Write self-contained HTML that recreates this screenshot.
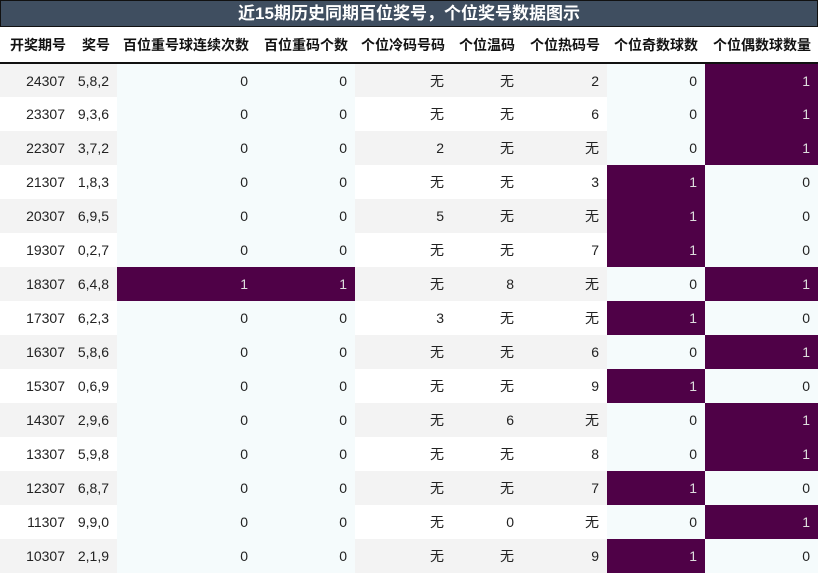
<!DOCTYPE html>
<html><head><meta charset="utf-8"><style>
*{margin:0;padding:0;box-sizing:border-box}
body{width:818px;height:574px;background:#fff;font-family:"Liberation Sans","Noto Sans CJK SC",sans-serif;overflow:hidden}
.title{position:absolute;left:0;top:0;width:818px;height:27px;background:#3f4e60;border:1px solid #111;color:#fff;font-weight:bold;font-size:17px;text-align:center;line-height:25px;font-family:"Liberation Sans","Noto Sans CJK SC",sans-serif}
table{position:absolute;left:0;top:27px;border-collapse:collapse;table-layout:fixed;width:818px}
th{height:36px;font-size:14px;font-weight:bold;text-align:right;padding-right:7px;border-bottom:2px solid #111;color:#111;white-space:nowrap}
td{height:34px;font-size:14px;text-align:right;padding-right:8px;color:#222;white-space:nowrap}
tr:nth-child(odd) td{background:#f3f3f3}
tr td.b{background:#f5fbfc!important}
tr td.p{background:#4f0147!important;color:#ddd}
</style></head><body>
<div class="title">近15期历史同期百位奖号，个位奖号数据图示</div>
<table>
<colgroup><col style="width:73px"><col style="width:44px"><col style="width:139px"><col style="width:99px"><col style="width:97px"><col style="width:70px"><col style="width:85px"><col style="width:98px"><col style="width:113px"></colgroup>
<thead><tr><th>开奖期号</th><th>奖号</th><th>百位重号球连续次数</th><th>百位重码个数</th><th>个位冷码号码</th><th>个位温码</th><th>个位热码号</th><th>个位奇数球数</th><th>个位偶数球数量</th></tr></thead>
<tbody id="tb"></tbody>
</table>
<script>
var d=[
["24307","5,8,2",0,0,"无","无","2",0,1],
["23307","9,3,6",0,0,"无","无","6",0,1],
["22307","3,7,2",0,0,"2","无","无",0,1],
["21307","1,8,3",0,0,"无","无","3",1,0],
["20307","6,9,5",0,0,"5","无","无",1,0],
["19307","0,2,7",0,0,"无","无","7",1,0],
["18307","6,4,8",1,1,"无","8","无",0,1],
["17307","6,2,3",0,0,"3","无","无",1,0],
["16307","5,8,6",0,0,"无","无","6",0,1],
["15307","0,6,9",0,0,"无","无","9",1,0],
["14307","2,9,6",0,0,"无","6","无",0,1],
["13307","5,9,8",0,0,"无","无","8",0,1],
["12307","6,8,7",0,0,"无","无","7",1,0],
["11307","9,9,0",0,0,"无","0","无",0,1],
["10307","2,1,9",0,0,"无","无","9",1,0]];
var h="";
d.forEach(function(r){
h+="<tr><td>"+r[0]+"</td><td>"+r[1]+"</td>";
[2,3].forEach(function(i){h+="<td class='"+(r[i]?"p":"b")+"'>"+r[i]+"</td>";});
h+="<td>"+r[4]+"</td><td>"+r[5]+"</td><td>"+r[6]+"</td>";
[7,8].forEach(function(i){h+="<td class='"+(r[i]?"p":"b")+"'>"+r[i]+"</td>";});
h+="</tr>";});
document.getElementById("tb").innerHTML=h;
</script>
</body></html>
